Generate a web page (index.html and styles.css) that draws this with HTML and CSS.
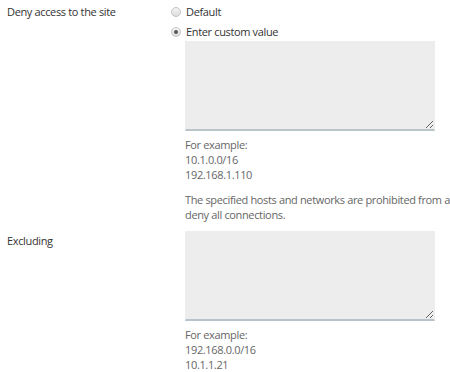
FILE: index.html
```html
<!DOCTYPE html>
<html lang="en">
<head>
    <meta charset="UTF-8">
    <meta name="viewport" content="width=device-width, initial-scale=1.0">
    <title>Access restrictions</title>
    <link rel="stylesheet" href="styles.css">
</head>
<body>
    <form class="form">
        <div class="form-row">
            <label class="form-label">Deny access to the site</label>
            <div class="form-field">
                <label class="radio">
                    <input type="radio" name="deny" value="default">
                    <span>Default</span>
                </label>
                <label class="radio">
                    <input type="radio" name="deny" value="custom" checked>
                    <span>Enter custom value</span>
                </label>
                <div class="indent">
                    <textarea class="input-area"></textarea>
                    <div class="hint">For example:<br>10.1.0.0/16<br>192.168.1.110</div>
                    <p class="hint hint-wide">The specified hosts and networks are prohibited from accessing the site. Enter * to<br>deny all connections.</p>
                </div>
            </div>
        </div>

        <div class="form-row row-excluding">
            <label class="form-label">Excluding</label>
            <div class="form-field">
                <div class="indent">
                    <textarea class="input-area"></textarea>
                    <div class="hint">For example:<br>192.168.0.0/16<br>10.1.1.21</div>
                </div>
            </div>
        </div>
    </form>
</body>
</html>
```

FILE: styles.css
```css
* {
    box-sizing: border-box;
    margin: 0;
    padding: 0;
}

html, body {
    overflow: hidden;
}

body {
    font-family: 'Open Sans', 'Segoe UI', Arial, sans-serif;
    font-size: 11px;
    line-height: 15px;
    letter-spacing: -0.35px;
    color: #333;
    background: #fff;
}

.form {
    padding: 4px 0 0 7px;
    width: 900px;
}

.form-row {
    display: grid;
    grid-template-columns: 164px 1fr;
}

.row-excluding {
    margin-top: 9px;
}

.row-excluding .form-label {
    padding-top: 2px;
}

.form-label {
    color: #333;
}

.radio {
    display: flex;
    align-items: center;
    gap: 5px;
    margin-bottom: 5px;
    color: #333;
}

.radio input {
    appearance: none;
    -webkit-appearance: none;
    width: 10px;
    height: 10px;
    border-radius: 50%;
    border: 1px solid #c4c4c4;
    background: linear-gradient(#f4f4f4, #dcdcdc);
    position: relative;
    margin: 0;
}

.radio input:checked::after {
    content: "";
    position: absolute;
    left: 2px;
    top: 2px;
    width: 4px;
    height: 4px;
    border-radius: 50%;
    background: #555;
}

.indent {
    padding-left: 14px;
}

.radio + .indent {
    margin-top: -3px;
}

.input-area {
    display: block;
    width: 250px;
    height: 90px;
    background: #ededed;
    border: 1px solid #ededed;
    border-bottom: 2px solid #b9c3ca;
    resize: both;
    font: inherit;
}

.hint {
    color: #666;
    margin-top: 6px;
}

.hint-wide {
    margin-top: 10px;
    white-space: nowrap;
}
```
